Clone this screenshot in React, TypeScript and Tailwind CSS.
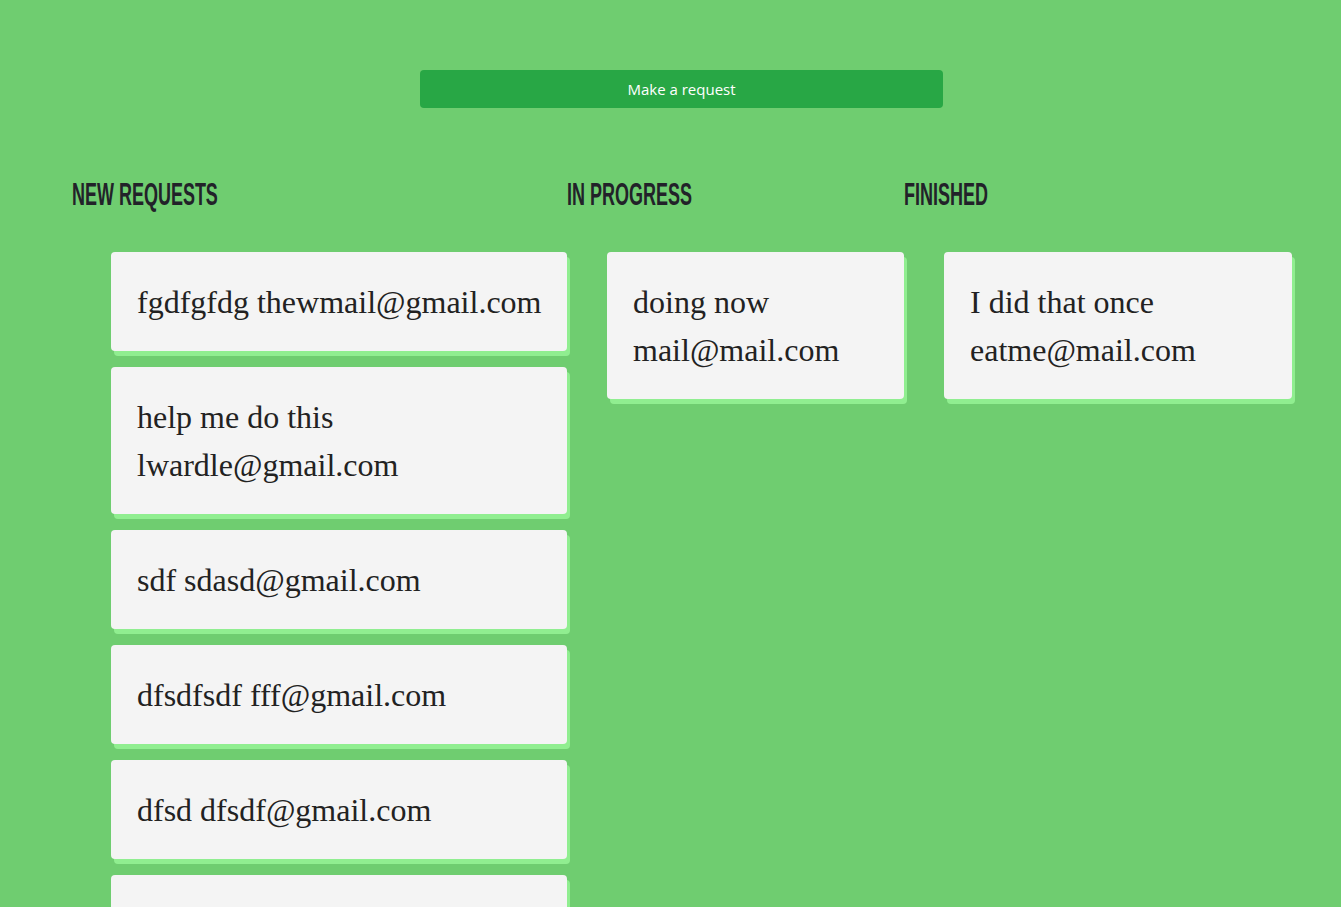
const columns = [
  {
    title: "New requests",
    headW: "w-[495px]",
    cardW: "w-[456px]",
    indent: "pl-[39px]",
    items: [
      "fgdfgfdg thewmail@gmail.com",
      "help me do this lwardle@gmail.com",
      "sdf sdasd@gmail.com",
      "dfsdfsdf fff@gmail.com",
      "dfsd dfsdf@gmail.com",
      "asdf asdf@gmail.com",
    ],
  },
  {
    title: "In progress",
    headW: "w-[337px]",
    cardW: "w-[297px]",
    indent: "pl-[40px]",
    items: ["doing now mail@mail.com"],
  },
  {
    title: "Finished",
    headW: "w-[388px]",
    cardW: "w-[348px]",
    indent: "pl-[40px]",
    items: ["I did that once eatme@mail.com"],
  },
];

export default function App() {
  return (
    <div className="h-[907px] w-full overflow-hidden bg-[#6fcd70]">
      <div className="flex justify-center pl-[22px] pt-[70px]">
        <button className="h-[38px] w-[523px] rounded-[4px] bg-[#28a745] text-[15px] text-white font-['Open_Sans',sans-serif]">
          Make a request
        </button>
      </div>

      <div className="flex pl-[72px] pt-[64px]">
        {columns.map((col) => (
          <div key={col.title} className={col.headW}>
            <h2 className="h-[45px] whitespace-nowrap text-[31px] font-bold uppercase leading-[45px] text-[#222229] font-['Liberation_Sans',sans-serif]">
              <span className="inline-block origin-left scale-x-[0.58]">{col.title}</span>
            </h2>
            <div className={`mt-[35px] flex flex-col gap-4 ${col.indent}`}>
              {col.items.map((t) => (
                <div
                  key={t}
                  className={`${col.cardW} rounded-[4px] bg-[#f4f4f4] pt-[26px] pb-[25px] pl-[26px] pr-[12px] text-[32px] leading-[48px] text-[#222] shadow-[3px_5px_0_#90ee90] font-['Liberation_Serif',serif]`}
                >
                  {t}
                </div>
              ))}
            </div>
          </div>
        ))}
      </div>
    </div>
  );
}
